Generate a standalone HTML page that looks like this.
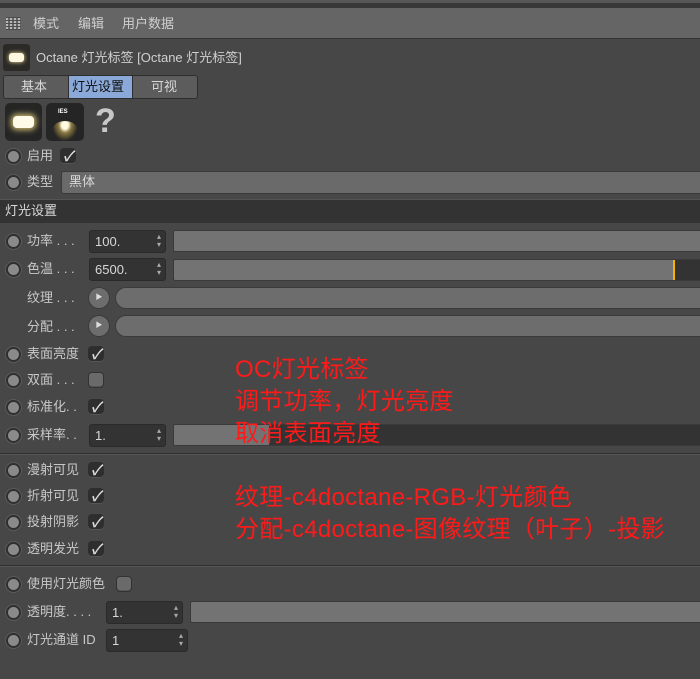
<!DOCTYPE html>
<html><head><meta charset="utf-8"><style>
*{margin:0;padding:0;box-sizing:border-box}
body{width:700px;height:679px;background:#474747;position:relative;overflow:hidden;font-family:"Liberation Sans","Noto Sans CJK SC",sans-serif;font-size:13px;color:#c8c8c8}
.a{position:absolute}
.t{position:absolute;line-height:16px;white-space:nowrap}
.r{position:absolute;width:15px;height:15px;border-radius:50%;background:#8a8a8a;border:2px solid #2f2f2f;box-shadow:0 0 0 1px #5a5a5a}
.cb{position:absolute;width:16px;height:16px;border-radius:4px;background:#2e2e2e;box-shadow:inset 0 -1px 0 #555;color:#ddd;font-size:14px;line-height:16px;text-align:center;font-style:italic;font-weight:bold}
.cb.off{background:#6a6a6a;border:1px solid #333}
.num{position:absolute;height:23px;background:#333;border-radius:3px;border:1px solid #2a2a2a;color:#d8d8d8;padding-left:5px;line-height:21px}
.num:after{content:"▴\A▾";white-space:pre;position:absolute;right:4px;top:2px;font-size:8px;line-height:8px;color:#aaa}
.sl{position:absolute;height:22px;background:#737373;border-radius:2px;border:1px solid #3a3a3a}
.bt{position:absolute;width:22px;height:22px;border-radius:50%;background:#6d6d6d;border:1px solid #3a3a3a;font-size:7px;text-align:center;line-height:20px;color:#ddd}
.bar{position:absolute;height:22px;background:#6d6d6d;border-radius:11px 0 0 11px;border:1px solid #3a3a3a}
.red{position:absolute;color:#ff1a1a;font-size:24px;line-height:32px;white-space:nowrap;font-family:"Liberation Sans","Noto Sans CJK SC",sans-serif;letter-spacing:0.3px}
.hr{position:absolute;left:0;width:700px;height:2px;background:#2f2f2f;border-bottom:1px solid #555}
</style></head><body>
<div class="a" style="left:0;top:0;width:700px;height:3px;background:#575757"></div>
<div class="a" style="left:0;top:3px;width:700px;height:5px;background:#383838"></div>
<div class="a" style="left:0;top:8px;width:700px;height:31px;background:#656565;border-bottom:1px solid #333"></div>
<div class="a" style="left:6px;top:17px;width:15px;height:13px;background:repeating-linear-gradient(0deg,#464646 0 1px,transparent 1px 3px),repeating-linear-gradient(90deg,#ccc 0 2px,transparent 2px 4px);opacity:.8"></div>
<div class="t" style="left:33px;top:16px;color:#d0d0d0">模式</div>
<div class="t" style="left:78px;top:16px;color:#d0d0d0">编辑</div>
<div class="t" style="left:122px;top:16px;color:#d0d0d0">用户数据</div>

<div class="a" style="left:3px;top:44px;width:27px;height:27px;background:#2c2a26;border-radius:3px"></div>
<div class="a" style="left:9px;top:53px;width:15px;height:9px;background:#fff8e0;border-radius:3px;box-shadow:0 0 4px #ffe9a8"></div>
<div class="t" style="left:36px;top:50px;color:#d0d0d0">Octane 灯光标签 [Octane 灯光标签]</div>

<div class="a" style="left:3px;top:75px;width:195px;height:24px;background:#5c5c5c;border:1px solid #2e2e2e;border-radius:3px"></div>
<div class="a" style="left:68px;top:75px;width:65px;height:24px;background:#8aa9d8;border:1px solid #2e2e2e"></div>
<div class="t" style="left:21px;top:79px;color:#d8d8d8">基本</div>
<div class="t" style="left:72px;top:79px;color:#111">灯光设置</div>
<div class="t" style="left:151px;top:79px;color:#d8d8d8">可视</div>

<div class="a" style="left:5px;top:103px;width:37px;height:38px;background:#252525;border-radius:5px"></div>
<div class="a" style="left:13px;top:116px;width:21px;height:12px;background:#fffbe8;border-radius:4px;box-shadow:0 0 6px 2px #c9b870"></div>
<div class="a" style="left:46px;top:103px;width:38px;height:38px;background:#252525;border-radius:5px;overflow:hidden"><div class="a" style="left:12px;top:6px;font-size:6px;color:#fff;font-weight:bold">IES</div><div class="a" style="left:6px;top:18px;width:26px;height:20px;border-radius:50% 50% 0 0;background:radial-gradient(ellipse at 50% 20%,#fffbe0 0 18%,#8a7a40 35%,transparent 70%)"></div></div>
<div class="t" style="left:95px;top:103px;font-size:34px;line-height:36px;font-weight:bold;color:#c8c8c8">?</div>

<div class="r" style="left:6px;top:149px"></div><div class="t" style="left:27px;top:148px">启用</div><div class="cb" style="left:60px;top:148px">✓</div>
<div class="r" style="left:6px;top:175px"></div><div class="t" style="left:27px;top:174px">类型</div>
<div class="a" style="left:61px;top:171px;width:645px;height:23px;background:#6a6a6a;border:1px solid #3a3a3a;border-radius:3px"></div>
<div class="t" style="left:69px;top:174px;color:#d8d8d8">黑体</div>

<div class="a" style="left:0;top:199px;width:700px;height:24px;background:#333;border-top:1px solid #555"></div>
<div class="t" style="left:5px;top:203px;color:#d8d8d8">灯光设置</div>

<div class="r" style="left:6px;top:234px"></div><div class="t" style="left:27px;top:233px">功率 . . .</div>
<div class="num" style="left:89px;top:230px;width:77px">100.</div>
<div class="sl" style="left:173px;top:230px;width:530px"></div>

<div class="r" style="left:6px;top:262px"></div><div class="t" style="left:27px;top:261px">色温 . . .</div>
<div class="num" style="left:89px;top:258px;width:77px">6500.</div>
<div class="sl" style="left:173px;top:259px;width:530px;background:linear-gradient(90deg,#737373 0 499px,#f5b400 499px 501px,#333 501px)"></div>

<div class="t" style="left:27px;top:290px">纹理 . . .</div>
<div class="bt" style="left:88px;top:287px">▶</div><div class="bar" style="left:115px;top:287px;width:590px"></div>
<div class="t" style="left:27px;top:319px">分配 . . .</div>
<div class="bt" style="left:88px;top:315px">▶</div><div class="bar" style="left:115px;top:315px;width:590px"></div>

<div class="r" style="left:6px;top:347px"></div><div class="t" style="left:27px;top:346px">表面亮度</div><div class="cb" style="left:88px;top:346px">✓</div>
<div class="r" style="left:6px;top:373px"></div><div class="t" style="left:27px;top:372px">双面 . . .</div><div class="cb off" style="left:88px;top:372px"></div>
<div class="r" style="left:6px;top:400px"></div><div class="t" style="left:27px;top:399px">标准化. .</div><div class="cb" style="left:88px;top:399px">✓</div>
<div class="r" style="left:6px;top:428px"></div><div class="t" style="left:27px;top:427px">采样率. .</div>
<div class="num" style="left:89px;top:424px;width:77px">1.</div>
<div class="sl" style="left:173px;top:424px;width:530px;background:linear-gradient(90deg,#737373 0 95px,#333 95px)"></div>

<div class="hr" style="top:453px"></div>
<div class="r" style="left:6px;top:463px"></div><div class="t" style="left:27px;top:462px">漫射可见</div><div class="cb" style="left:88px;top:462px">✓</div>
<div class="r" style="left:6px;top:489px"></div><div class="t" style="left:27px;top:488px">折射可见</div><div class="cb" style="left:88px;top:488px">✓</div>
<div class="r" style="left:6px;top:515px"></div><div class="t" style="left:27px;top:514px">投射阴影</div><div class="cb" style="left:88px;top:514px">✓</div>
<div class="r" style="left:6px;top:542px"></div><div class="t" style="left:27px;top:541px">透明发光</div><div class="cb" style="left:88px;top:541px">✓</div>

<div class="hr" style="top:565px"></div>
<div class="r" style="left:6px;top:577px"></div><div class="t" style="left:27px;top:576px">使用灯光颜色</div><div class="cb off" style="left:116px;top:576px"></div>
<div class="r" style="left:6px;top:605px"></div><div class="t" style="left:27px;top:604px">透明度. . . .</div>
<div class="num" style="left:106px;top:601px;width:77px">1.</div>
<div class="sl" style="left:190px;top:601px;width:515px"></div>
<div class="r" style="left:6px;top:633px"></div><div class="t" style="left:27px;top:632px">灯光通道 ID</div>
<div class="num" style="left:106px;top:629px;width:82px">1</div>

<div class="red" style="left:235px;top:354px">OC灯光标签</div>
<div class="red" style="left:235px;top:386px">调节功率，灯光亮度</div>
<div class="red" style="left:235px;top:418px">取消表面亮度</div>
<div class="red" style="left:235px;top:482px">纹理-c4doctane-RGB-灯光颜色</div>
<div class="red" style="left:235px;top:514px">分配-c4doctane-图像纹理（叶子）-投影</div>
</body></html>
